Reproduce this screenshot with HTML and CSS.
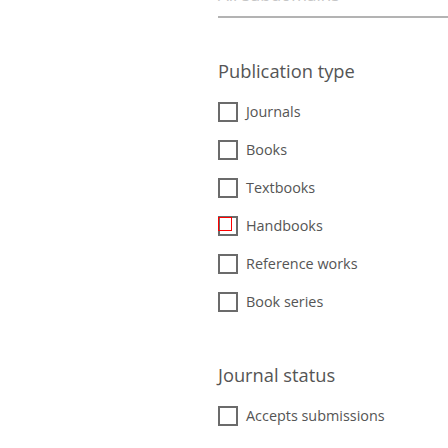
FILE: index.html
```html
<!DOCTYPE html>
<html lang="en">
<head>
<meta charset="utf-8">
<title>Filters</title>
<link rel="stylesheet" href="styles.css">
</head>
<body>
<aside class="filters">
  <div class="select"><span class="select-text">All subdomains</span></div>

  <section class="group">
    <h2 class="group-title">Publication type</h2>
    <ul class="options">
      <li class="option"><span class="box"></span><span class="label">Journals</span></li>
      <li class="option"><span class="box"></span><span class="label">Books</span></li>
      <li class="option"><span class="box"></span><span class="label">Textbooks</span></li>
      <li class="option"><span class="box focused"></span><span class="label">Handbooks</span></li>
      <li class="option"><span class="box"></span><span class="label">Reference works</span></li>
      <li class="option"><span class="box"></span><span class="label">Book series</span></li>
    </ul>
  </section>

  <section class="group group-status">
    <h2 class="group-title">Journal status</h2>
    <ul class="options">
      <li class="option"><span class="box"></span><span class="label">Accepts submissions</span></li>
    </ul>
  </section>
</aside>
</body>
</html>
```

FILE: styles.css
```css
html, body {
  margin: 0;
  padding: 0;
  background: #ffffff;
}

body {
  font-family: "Open Sans", "Noto Sans", sans-serif;
  color: #505050;
  overflow: hidden;
}

.filters {
  padding-left: 218px;
  padding-top: 1px;
}

.select {
  margin-top: -16px;
  height: 20px;
  line-height: 20px;
  font-size: 17px;
  color: #c6c6c6;
  padding-bottom: 11px;
  border-bottom: 2px solid #b3b3b3;
}

.group {
  margin-top: 41px;
}

.group-status {
  margin-top: 51px;
}

.group-title {
  margin: 0;
  font-size: 18.3px;
  font-weight: 400;
  line-height: 24px;
  color: #555555;
}

.options {
  list-style: none;
  margin: 19px 0 0 0;
  padding: 0;
  display: flex;
  flex-direction: column;
  gap: 18px;
}

.option {
  display: flex;
  align-items: center;
  gap: 8px;
  height: 20px;
}

.box {
  position: relative;
  box-sizing: border-box;
  width: 20px;
  height: 20px;
  border: 2px solid #6b6b6b;
  flex: none;
}

.box.focused::after {
  content: "";
  position: absolute;
  left: -2px;
  top: -1px;
  width: 14px;
  height: 14px;
  box-sizing: border-box;
  border: 1px solid #ff0000;
}

.label {
  font-size: 14.4px;
  line-height: 20px;
  color: #555555;
}
```
